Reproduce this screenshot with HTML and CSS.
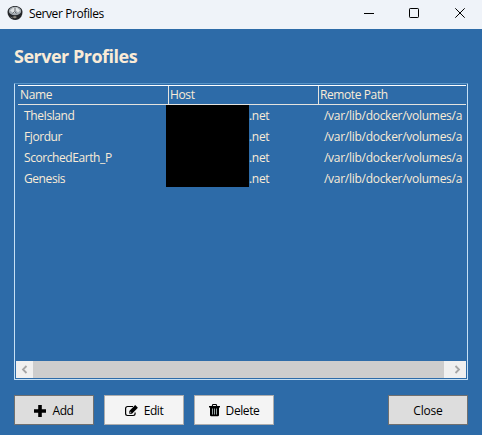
FILE: index.html
```html
<!DOCTYPE html>
<html lang="en">
<head>
<meta charset="utf-8">
<title>Server Profiles</title>
<link rel="stylesheet" href="styles.css">
</head>
<body>
<div class="window">
  <header class="titlebar">
    <svg class="app-icon" width="16" height="16" viewBox="0 0 16 16">
      <path d="M.5 7C.5 3.500 4 1 8 1s7.500 2.500 7.500 6c0 3-1.500 6-4 7.300-2.500 1-5 .7-7-.3C2 12.500.5 10 .5 7z" fill="#232528"/>
      <ellipse cx="8" cy="6" rx="6.200" ry="4.300" fill="#a4abb1"/>
      <path d="M3 5.500 6 3l4-.5 3 3-2 2-2-2-2 3z" fill="#dfe2e4"/>
      <path d="M8 3v3.500M5.500 8.500l2-2 2 2M3.500 12l2 1" stroke="#64696d" fill="none"/>
      <path d="M5 12l3-1 2 1-2 1.500z" fill="#8b867d"/>
    </svg>
    <span class="caption">Server Profiles</span>
    <div class="controls">
      <svg width="46" height="28" viewBox="0 0 46 28"><path d="M18 13.500h10" stroke="#000"/></svg>
      <svg width="46" height="28" viewBox="0 0 46 28"><rect x="17.500" y="8.500" width="9" height="9" rx=".7" fill="none" stroke="#000"/></svg>
      <svg width="46" height="28" viewBox="0 0 46 28"><path d="M17.300 8.300l9.400 9.400M26.700 8.300l-9.400 9.400" stroke="#000" fill="none"/></svg>
    </div>
  </header>
  <main class="content">
    <h1>Server Profiles</h1>
    <section class="list">
      <div class="row head"><span>Name</span><span>Host</span><span>Remote Path</span></div>
      <div class="rows">
        <div class="row"><span class="name">TheIsland</span><span class="host">.net</span><span class="path">/var/lib/docker/volumes/a</span></div>
        <div class="row"><span class="name">Fjordur</span><span class="host">.net</span><span class="path">/var/lib/docker/volumes/a</span></div>
        <div class="row"><span class="name">ScorchedEarth_P</span><span class="host">.net</span><span class="path">/var/lib/docker/volumes/a</span></div>
        <div class="row"><span class="name">Genesis</span><span class="host">.net</span><span class="path">/var/lib/docker/volumes/a</span></div>
        <div class="mask"></div>
      </div>
      <div class="scrollbar">
        <svg class="arrow" width="17" height="17" viewBox="0 0 17 17"><path d="M10.500 5 7 8.500l3.500 3.500" fill="none" stroke="#a6a6a6" stroke-width="1.800"/></svg>
        <div class="thumb"></div>
        <svg class="arrow" width="22" height="17" viewBox="0 0 22 17"><path d="M11.500 5 15 8.500 11.500 12" fill="none" stroke="#a6a6a6" stroke-width="1.800"/></svg>
      </div>
    </section>
    <footer class="actions">
      <button class="gray"><svg width="12" height="12" viewBox="0 0 12 12"><path d="M4.200 0h3.600v4.200H12v3.600H7.800V12H4.200V7.800H0V4.200h4.200z"/></svg><span>Add</span></button>
      <button><svg width="13" height="12" viewBox="0 0 13 12"><path d="M8 1.500H2.500A1.900 1.900 0 0 0 .6 3.400v5.200a1.900 1.900 0 0 0 1.900 1.900h5.700a1.900 1.900 0 0 0 1.900-1.900V7.500" fill="none" stroke="#000" stroke-width="1.200"/><path d="M4.300 6 10.200.1l2.700 2.700-5.900 5.900H4.300z"/><path d="M5.200 6.500v1.300h1.300z" fill="#f4f4f4"/></svg><span>Edit</span></button>
      <button><svg width="11" height="13" viewBox="0 0 11 13"><path fill-rule="evenodd" d="M3.500 0h4l.8 2H11v1.500h-1V11a1.200 1.200 0 0 1-1.200 1.200H2.200A1.200 1.200 0 0 1 1 11V3.500H0V2h2.700zM4.200 1l-.4 1h3.400l-.4-1z"/><path d="M3.500 4.500v6M5.500 4.500v6M7.500 4.500v6" stroke="#a9b5b5" stroke-width=".9"/></svg><span>Delete</span></button>
      <button class="gray close"><span>Close</span></button>
    </footer>
  </main>
</div>
</body>
</html>
```
FILE: styles.css
```css
* { box-sizing: border-box; }
body {
  margin: 0;
  background: #2d6ba8;
  font: 12px/16px "Open Sans", "Noto Sans", sans-serif;
  overflow: hidden;
}
.window { width: 482px; height: 435px; display: flex; flex-direction: column; }
.titlebar {
  height: 29px;
  background: #eff3f9;
  display: flex;
  align-items: flex-start;
  padding-left: 7px;
}
.app-icon { margin-top: 5px; }
.caption { margin: 6px 0 0 6px; color: #000; letter-spacing: -.4px; white-space: nowrap; }
.controls { display: flex; margin: 0 -2px 0 auto; }
.content { flex: 1; display: flex; flex-direction: column; padding: 14px 14px 10px; }
h1 {
  margin: 0;
  height: 40px;
  font-size: 18px;
  line-height: 26px;
  font-weight: 700;
  letter-spacing: -.5px;
  color: #faebd7;
}
.list {
  height: 297px;
  border: 1px solid #c5e0f5;
  border-top-color: #5793c6;
  border-radius: 1px;
  padding: 1px;
  display: flex;
  flex-direction: column;
}
.row { display: grid; grid-template-columns: 150px 150px 1fr; height: 21px; color: #faebd7; white-space: nowrap; }
.head {
  height: 20px;
  margin-left: 2px;
  border-top: 1px solid #fff;
  border-bottom: 1px solid #e4e3df;
  letter-spacing: -.35px;
}
.head span { padding: 1px 0 0 2px; margin-right: -1px; border-right: 1px solid #e4e3df; }
.head span:last-child { margin-right: 0; border-right: 0; letter-spacing: -.4px; }
.rows { position: relative; flex: 1; padding-left: 8px; }
.rows .row { padding-top: 3px; grid-template-columns: 225px 75px 1fr; }
.name { letter-spacing: -.42px; }
.host { letter-spacing: -.3px; }
.path { letter-spacing: -.28px; }
.mask { position: absolute; left: 150px; top: 0; width: 83px; height: 82px; background: #000; }
.scrollbar { display: flex; height: 17px; background: #cdcdcd; }
.arrow { background: #f0f0f0; }
.thumb { flex: 1; }
.actions { display: flex; gap: 10px; margin-top: 15px; }
button {
  width: 80px;
  height: 30px;
  padding: 1px 0 0;
  border: 1px solid #adadad;
  background: #f4f4f4;
  color: #000;
  font: inherit;
  letter-spacing: -.4px;
  display: flex;
  align-items: center;
  justify-content: center;
  gap: 6px;
}
.gray { background: #ddd; border-color: #707070; }
.close { margin-left: auto; letter-spacing: -.2px; }
```
